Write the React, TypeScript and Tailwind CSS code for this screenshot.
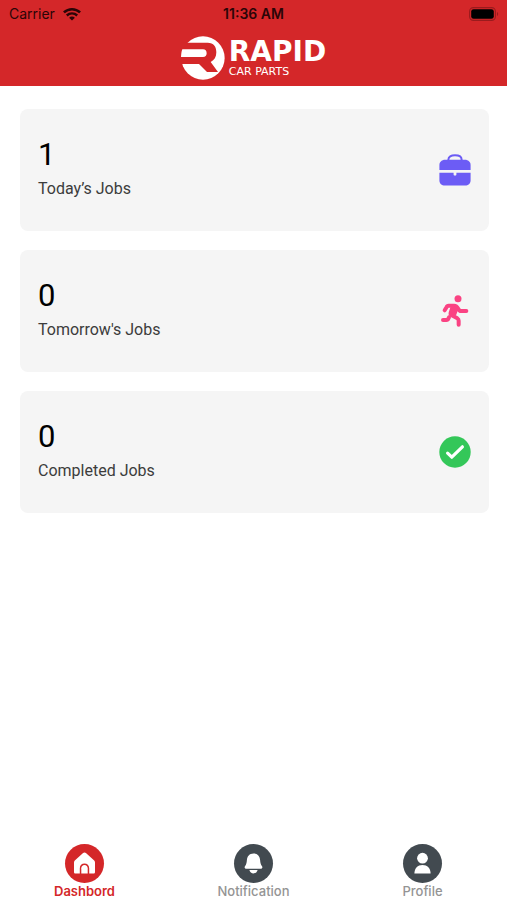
import React from 'react';

interface IconProps { className?: string; }

const WifiIcon: React.FC<IconProps> = ({ className }) => (
  <svg viewBox="0 0 18 13" fill="none" className={className} aria-hidden="true">
    <path d="M0.9 4.9C5.6 0.6 12.4 0.6 17.1 4.9" stroke="currentColor" strokeWidth="2.6" />
    <path d="M3.8 8C6.8 5.2 11.2 5.2 14.2 8" stroke="currentColor" strokeWidth="2.4" />
    <path d="M9 13L6.1 10.2C7.7 8.7 10.3 8.7 11.9 10.2Z" fill="currentColor" />
  </svg>
);

const BatteryIcon: React.FC<IconProps> = ({ className }) => (
  <svg viewBox="0 0 30 14" fill="none" className={className} aria-hidden="true">
    <rect x="0.6" y="0.6" width="25.8" height="12.8" rx="3.8" stroke="#9a1b1d" strokeWidth="1.1" />
    <rect x="2.2" y="2.2" width="22.6" height="9.6" rx="2.4" fill="#000" />
    <path d="M28 5c1.6 0.5 1.6 3.5 0 4z" fill="#9a1b1d" />
  </svg>
);

const LogoMark: React.FC<IconProps> = ({ className }) => (
  <svg viewBox="4 4 132 132" className={className} aria-hidden="true">
    <circle cx="70" cy="70" r="65" fill="#fff" />
    <path d="M0 24H84C102 24 110 36 110 53C110 67 104 77 93 82L115 112H82L58 88H0Z" fill="#d42729" />
    <path d="M8 44H70C77 44 81 49 81 55.5S77 67 70 67H4C5 58 5 51 8 44Z" fill="#fff" />
  </svg>
);

const BriefcaseIcon: React.FC<IconProps> = ({ className }) => (
  <svg viewBox="0 0 32 32" fill="none" className={className} aria-hidden="true">
    <path d="M9.4 6.5V5.5C9.4 2.8 12 1.2 16 1.2S22.6 2.8 22.6 5.5V6.5" stroke="currentColor" strokeWidth="2" />
    <path d="M6 5.8H26C29 5.8 31.6 8 31.6 11V16H0.4V11C0.4 8 3 5.8 6 5.8Z" fill="currentColor" />
    <path d="M0.4 18.8H14.6V20.4C14.6 22 17.4 22 17.4 20.4V18.8H31.6V26.4C31.6 29.4 29.2 31.6 26.2 31.6H5.8C2.8 31.6 0.4 29.4 0.4 26.4Z" fill="currentColor" />
  </svg>
);

const RunningIcon: React.FC<IconProps> = ({ className }) => (
  <svg viewBox="3 6 96 96" fill="none" stroke="currentColor" strokeWidth="12" strokeLinecap="round" strokeLinejoin="round" className={className} aria-hidden="true">
    <circle cx="60" cy="17" r="10.5" fill="currentColor" stroke="none" />
    <path d="M20 52L26 42C27 39 29 38 32 38H48C56 38 58 42 61 48C63 52 65 54 69 54H85" />
    <path d="M44 42L38 59C37 63 38 65 41 67L58 76C61 78 62 80 62 83V95" />
    <path d="M49 44L44 60L51 64L57 48Z" fill="currentColor" strokeWidth="8" />
    <path d="M33 73L31 77C30 80 28 81 25 81H15" />
  </svg>
);

const CheckIcon: React.FC<IconProps> = ({ className }) => (
  <svg viewBox="0 0 32 32" fill="none" className={className} aria-hidden="true">
    <circle cx="16" cy="16" r="15.7" fill="currentColor" />
    <path d="M8.6 17.2L12.8 21.2L23.4 10.8" stroke="#fff" strokeWidth="3.2" strokeLinecap="round" strokeLinejoin="round" />
  </svg>
);

const HomeIcon: React.FC<IconProps> = ({ className }) => (
  <svg viewBox="0 0 39 39" className={className} aria-hidden="true">
    <path d="M17.8 9.2C18.8 8.3 20.2 8.3 21.2 9.2L29.2 16.6C29.8 17.2 30 17.8 30 18.6V28C30 29.1 29.5 29.6 28.4 29.6H24.2V24.2C24.2 21.4 22.2 19.4 19.5 19.4S14.8 21.4 14.8 24.2V29.6H10.6C9.5 29.6 9 29.1 9 28V18.6C9 17.8 9.2 17.2 9.8 16.6Z" fill="#fff" />
    <path d="M16.3 29.6V24.3C16.3 22.3 17.6 20.9 19.5 20.9S22.7 22.3 22.7 24.3V29.6Z" fill="#fff" />
  </svg>
);

const BellIcon: React.FC<IconProps> = ({ className }) => (
  <svg viewBox="0 0 39 39" className={className} aria-hidden="true">
    <path d="M19.5 9.4C23.6 9.4 25.8 12.2 26.1 16C26.3 19 26.8 20.6 27.9 22C29 23.4 28.2 24.8 26.7 24.8H12.3C10.8 24.8 10 23.4 11.1 22C12.2 20.6 12.7 19 12.9 16C13.2 12.2 15.4 9.4 19.5 9.4Z" fill="#fff" />
    <path d="M15.4 26H23.6C23 28.2 21.6 29.4 19.5 29.4S16 28.2 15.4 26Z" fill="#fff" />
  </svg>
);

const ProfileIcon: React.FC<IconProps> = ({ className }) => (
  <svg viewBox="0 0 39 39" className={className} aria-hidden="true">
    <circle cx="19.5" cy="14.2" r="5.4" fill="#fff" />
    <path d="M11.4 29.6C11.4 24 14.7 20.9 19.5 20.9S27.6 24 27.6 29.6Z" fill="#fff" />
  </svg>
);

const jobCards = [
  { title: 'Today’s Jobs', count: 1, icon: BriefcaseIcon, color: 'text-[#6c5cf5]' },
  { title: "Tomorrow's Jobs", count: 0, icon: RunningIcon, color: 'text-[#fa4383]' },
  { title: 'Completed Jobs', count: 0, icon: CheckIcon, color: 'text-[#34c759]' },
];

const tabs = [
  { label: 'Dashbord', icon: HomeIcon, circle: 'bg-[#d42729]', text: 'text-[#d42729] font-semibold', active: true },
  { label: 'Notification', icon: BellIcon, circle: 'bg-[#424a50]', text: 'text-[#949494] font-medium', active: false },
  { label: 'Profile', icon: ProfileIcon, circle: 'bg-[#424a50]', text: 'text-[#949494] font-medium', active: false },
];

const App: React.FC = () => (
  <div className="flex min-h-screen flex-col bg-white font-['Roboto',sans-serif]">
    <header className="bg-[#d42729] pb-1">
      <div className="grid h-7 grid-cols-3 items-center px-2 font-['Inter',sans-serif] text-sm text-[#2b0507]">
        <div className="flex items-center gap-2 pl-px">
          <span>Carrier</span>
          <WifiIcon className="h-3.5 w-[18px]" />
        </div>
        <span className="text-center font-semibold">11:36 AM</span>
        <BatteryIcon className="h-3.5 w-[30px] justify-self-end" />
      </div>
      <div className="flex items-center justify-center gap-1 pt-2 pb-0.5 text-white">
        <LogoMark className="h-11 w-11" />
        <div className="flex flex-col font-['DejaVu_Sans',sans-serif]">
          <span className="text-[28px] leading-7 font-bold">RAPID</span>
          <span className="text-[11px] leading-3">CAR PARTS</span>
        </div>
      </div>
    </header>

    <main className="flex flex-1 flex-col gap-[19px] pt-[23px] pr-[18px] pl-5">
      {jobCards.map(card => (
        <button key={card.title} type="button" className="flex h-[122px] items-center justify-between rounded-lg bg-[#f5f5f5] px-[18px] text-left">
          <span className="flex flex-col gap-0.5">
            <span className="text-[31px] leading-9 text-black">{card.count}</span>
            <span className="text-base leading-7 text-[#3c3c3c]">{card.title}</span>
          </span>
          <card.icon className={`h-8 w-8 ${card.color}`} />
        </button>
      ))}
    </main>

    <nav className="grid grid-cols-3 pb-px">
      {tabs.map(tab => (
        <a key={tab.label} href="#" aria-current={tab.active ? 'page' : undefined} className="flex flex-col items-center">
          <span className={`rounded-full ${tab.circle}`}><tab.icon className="h-[39px] w-[39px]" /></span>
          <span className={`font-['Inter',sans-serif] text-[13px] leading-4 ${tab.text}`}>{tab.label}</span>
        </a>
      ))}
    </nav>
  </div>
);

export default App;
